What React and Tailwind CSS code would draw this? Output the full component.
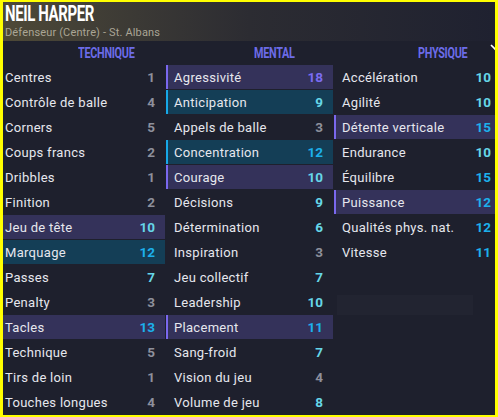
import React from 'react';

// attribute rows: [label, value, highlight]  p = purple (key), t = teal (preferred)
const technique = [
  ['Centres', 1],
  ['Contrôle de balle', 4],
  ['Corners', 5],
  ['Coups francs', 2],
  ['Dribbles', 1],
  ['Finition', 2],
  ['Jeu de tête', 10, 'p'],
  ['Marquage', 12, 't'],
  ['Passes', 7],
  ['Penalty', 3],
  ['Tacles', 13, 'p'],
  ['Technique', 5],
  ['Tirs de loin', 1],
  ['Touches longues', 4],
];

const mental = [
  ['Agressivité', 18, 'p'],
  ['Anticipation', 9, 't'],
  ['Appels de balle', 3],
  ['Concentration', 12, 't'],
  ['Courage', 10, 'p'],
  ['Décisions', 9],
  ['Détermination', 6],
  ['Inspiration', 3],
  ['Jeu collectif', 7],
  ['Leadership', 10],
  ['Placement', 11, 'p'],
  ['Sang-froid', 7],
  ['Vision du jeu', 4],
  ['Volume de jeu', 8],
];

const physique = [
  ['Accélération', 10],
  ['Agilité', 10],
  ['Détente verticale', 15, 'p'],
  ['Endurance', 10],
  ['Équilibre', 15],
  ['Puissance', 12, 'p'],
  ['Qualités phys. nat.', 12],
  ['Vitesse', 11],
];

function valueColor(v) {
  if (v >= 16) return 'text-[#7b6cf2]';
  if (v >= 11) return 'text-[#1cb0ec]';
  if (v >= 6) return 'text-[#66d6e8]';
  return 'text-[#8e909c]';
}

function AttrRow({ label, value, hl }) {
  const bg =
    hl === 'p'
      ? 'bg-[#34325a] border-[#7a68ee]'
      : hl === 't'
      ? 'bg-[#143e56] border-[#17a8e8]'
      : 'border-transparent';
  return (
    <div className={`h-[24px] mb-[1px] flex items-center justify-between border-l-2 pl-[6px] pr-[10px] pt-[1px] ${bg}`}>
      <span className="text-[13px] tracking-[0.3px] text-[#e6e7ee]">{label}</span>
      <span className={`text-[13.5px] font-bold ${valueColor(value)}`}>{value}</span>
    </div>
  );
}

function ColHeader({ title, pad }) {
  return (
    <div className={`h-[24px] flex items-center ${pad}`}>
      <span className="inline-block origin-left scale-x-[0.72] text-[15px] font-bold tracking-tight text-[#6c6ce8]">
        {title}
      </span>
    </div>
  );
}

export default function App() {
  return (
    <div
      className="w-[498px] h-[417px] overflow-hidden bg-[#1e202d] border-l-[3px] border-r-[3px] border-t-2 border-b-2 border-[#ffff00] relative"
      style={{ fontFamily: 'Roboto, "Noto Sans", sans-serif' }}
    >
      {/* name banner */}
      <div className="h-[39px] bg-gradient-to-r from-[#4e4937] via-[#2c2c32] to-[#1f2130] pl-[2px]">
        <div className="h-[23px] flex items-end">
          <span className="inline-block origin-left scale-x-[0.68] text-[22px] leading-none font-bold text-white tracking-tight">
            NEIL HARPER
          </span>
        </div>
        <div className="text-[11px] leading-[14px] tracking-[0.15px] text-[#aaa595] mt-[1px]">
          Défenseur (Centre) - St. Albans
        </div>
      </div>

      <svg className="absolute left-[487px] top-[42px]" width="12" height="8" viewBox="0 0 12 8">
        <polyline points="1,1 5,5 9,1" fill="none" stroke="#ffffff" strokeWidth="1.6" />
      </svg>

      <div className="-ml-[6px] grid grid-cols-[168px_167px_167px] gap-x-[1px]">
        <ColHeader title="TECHNIQUE" pad="pl-[81px]" />
        <ColHeader title="MENTAL" pad="pl-[88px]" />
        <ColHeader title="PHYSIQUE" pad="pl-[84px]" />

        <div>
          {technique.map(([l, v, h]) => (
            <AttrRow key={l} label={l} value={v} hl={h} />
          ))}
        </div>
        <div>
          {mental.map(([l, v, h]) => (
            <AttrRow key={l} label={l} value={v} hl={h} />
          ))}
        </div>
        <div>
          {physique.map(([l, v, h]) => (
            <AttrRow key={l} label={l} value={v} hl={h} />
          ))}
          <div className="h-[30px]" />
          <div className="ml-[3px] w-[136px] h-[20px] bg-[#222431]" />
        </div>
      </div>
    </div>
  );
}
